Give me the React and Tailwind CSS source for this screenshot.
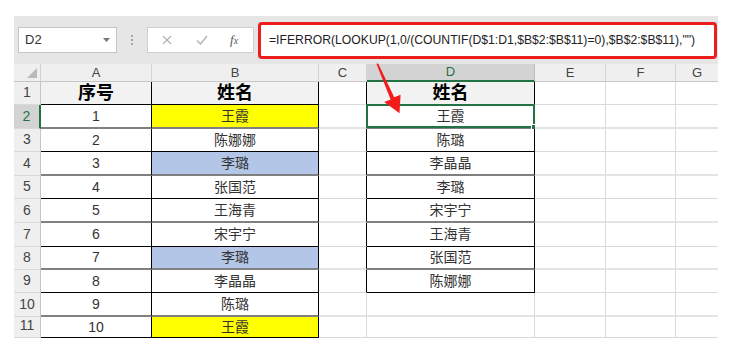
const COLS = [
  { key: 'A', w: 'w-[111px]' },
  { key: 'B', w: 'w-[167px]' },
  { key: 'C', w: 'w-[48px]' },
  { key: 'D', w: 'w-[168px]' },
  { key: 'E', w: 'w-[71px]' },
  { key: 'F', w: 'w-[70px]' },
  { key: 'G', w: 'w-[42px]' },
];

const HEIGHTS = ['h-[23px]', 'h-[24px]', 'h-[23px]', 'h-[24px]', 'h-[23px]', 'h-[24px]', 'h-[24px]', 'h-[23px]', 'h-[23px]', 'h-[24px]', 'h-[21px]'];

const A = ['序号', '1', '2', '3', '4', '5', '6', '7', '8', '9', '10'];
const B = ['姓名', '王霞', '陈娜娜', '李璐', '张国范', '王海青', '宋宇宁', '李璐', '李晶晶', '陈璐', '王霞'];
const D = ['姓名', '王霞', '陈璐', '李晶晶', '李璐', '宋宇宁', '王海青', '张国范', '陈娜娜', '', ''];

const FILL = { 2: 'bg-[#ffff00]', 4: 'bg-[#b4c6e7]', 8: 'bg-[#b4c6e7]', 11: 'bg-[#ffff00]' };

// table edges alternate between a thin black rule and a heavier grey one
const tableBottom = (r) => (r % 2 === 0 ? 'border-b-2 border-b-[#808080]' : 'border-b border-b-black');
const gridBottom = (r) => (r % 2 === 0 ? 'border-b-2 border-b-[#e4e4e4]' : 'border-b border-b-[#d9d9d9]');

function cellClass(col, r) {
  const inD = r <= 9;
  switch (col) {
    case 'A':
      return `border-r border-r-black ${tableBottom(r)} ${r === 1 ? 'bg-[#f2f2f2]' : 'bg-white'}`;
    case 'B':
      return `border-r border-r-black ${tableBottom(r)} ${r === 1 ? 'bg-[#f2f2f2]' : FILL[r] || 'bg-white'}`;
    case 'C':
      return `${inD ? 'border-r border-r-black' : 'border-r border-r-[#d9d9d9]'} ${gridBottom(r)} bg-white`;
    case 'D':
      return `${inD ? 'border-r border-r-black' : 'border-r border-r-[#d9d9d9]'} ${inD ? tableBottom(r) : gridBottom(r)} ${r === 1 ? 'bg-[#f2f2f2]' : 'bg-white'}`;
    case 'G':
      return `${gridBottom(r)} bg-white`;
    default:
      return `border-r border-r-[#d9d9d9] ${gridBottom(r)} bg-white`;
  }
}

function cellText(col, r) {
  if (col === 'A') return A[r - 1];
  if (col === 'B') return B[r - 1];
  if (col === 'D') return D[r - 1];
  return '';
}

function Toolbar() {
  return (
    <div className="flex items-center h-[48px] bg-[#e6e6e6] pl-[4px]">
      {/* Name box */}
      <div className="flex items-center justify-between w-[99px] h-[26px] bg-white border border-[#c6c6c6] pl-[6px] pr-[6px]">
        <span className="text-[13px] text-[#333]">D2</span>
        <svg width="7" height="4" viewBox="0 0 7 4">
          <polygon points="0,0 7,0 3.5,4" fill="#777" />
        </svg>
      </div>
      <div className="flex items-center justify-center w-[30px]">
        <div className="flex flex-col gap-[2px]">
          <span className="w-[2px] h-[2px] bg-[#a6a6a6]" />
          <span className="w-[2px] h-[2px] bg-[#a6a6a6]" />
          <span className="w-[2px] h-[2px] bg-[#a6a6a6]" />
        </div>
      </div>
      {/* Cancel / enter / fx */}
      <div className="flex items-center w-[107px] h-[26px] bg-white border border-[#d0d0d0]">
        <svg className="ml-[14px]" width="10" height="10" viewBox="0 0 10 10">
          <path d="M1 1 L9 9 M9 1 L1 9" stroke="#b3b3b3" strokeWidth="1.3" />
        </svg>
        <svg className="ml-[24px]" width="12" height="10" viewBox="0 0 12 10">
          <path d="M1 5.5 L4.5 9 L11 1" stroke="#b3b3b3" strokeWidth="1.4" fill="none" />
        </svg>
        <span className="ml-[22px] text-[13px] italic text-[#555] font-['Liberation_Serif',serif]">
          f<span className="text-[10px]">x</span>
        </span>
      </div>
      {/* Formula bar, outlined in red */}
      <div className="flex items-center ml-[4px] w-[459px] h-[37px] bg-white border-[3px] border-[#ee1d1d] rounded-[4px] pl-[8px]">
        <span className="text-[12.2px] text-[#222] whitespace-nowrap font-['Liberation_Sans',sans-serif]">
          =IFERROR(LOOKUP(1,0/(COUNTIF(D$1:D1,$B$2:$B$11)=0),$B$2:$B$11),"")
        </span>
      </div>
    </div>
  );
}

function ColumnHeader() {
  return (
    <div className="flex h-[18px] bg-[#efefef]">
      <div className="relative w-[27px] border-r border-r-[#cfcfcf] border-b border-b-[#c6c6c6]">
        <svg className="absolute right-[3px] bottom-[3px]" width="10" height="10" viewBox="0 0 10 10">
          <polygon points="10,0 10,10 0,10" fill="#b9b9b9" />
        </svg>
      </div>
      {COLS.map((c) =>
        c.key === 'D' ? (
          <div
            key={c.key}
            className={`${c.w} flex items-center justify-center bg-[#d3d3d3] border-r border-r-[#bdbdbd] border-b-2 border-b-[#217346] text-[13px] text-[#217346]`}
          >
            {c.key}
          </div>
        ) : (
          <div
            key={c.key}
            className={`${c.w} flex items-center justify-center ${c.key === 'G' ? '' : 'border-r border-r-[#d4d4d4]'} border-b border-b-[#c6c6c6] text-[13px] text-[#444]`}
          >
            {c.key}
          </div>
        )
      )}
    </div>
  );
}

function Row({ r }) {
  const h = HEIGHTS[r - 1];
  const active = r === 2;
  return (
    <div className={`flex ${h}`}>
      <div
        className={`w-[27px] flex items-end justify-center pb-[1px] text-[14px] ${
          active
            ? 'bg-[#d3d3d3] text-[#217346] border-r-2 border-r-[#217346]'
            : 'bg-[#efefef] text-[#444] border-r border-r-[#c6c6c6]'
        } border-b border-b-[#d9d9d9]`}
      >
        {r}
      </div>
      {COLS.map((c) => {
        const text = cellText(c.key, r);
        const head = r === 1;
        return (
          <div
            key={c.key}
            className={`${c.w} relative flex items-center justify-center ${cellClass(c.key, r)} ${
              head ? 'text-[18px] font-bold text-black' : 'text-[14px] text-[#333]'
            }`}
          >
            {text}
            {c.key === 'D' && r === 2 && (
              <div className="absolute -top-[1px] -left-[1px] -right-[1px] -bottom-[1px] border-2 border-[#217346]">
                <span className="absolute -right-[4px] -bottom-[4px] w-[6px] h-[6px] bg-[#217346] border border-white" />
              </div>
            )}
          </div>
        );
      })}
    </div>
  );
}

export default function App() {
  return (
    <div className="relative w-[735px] h-[353px] bg-white overflow-hidden font-['Liberation_Sans','Noto_Sans_CJK_SC',sans-serif]">
      <div className="ml-[14px] mt-[16px] w-[704px]">
        <Toolbar />
        <ColumnHeader />
        <div className="h-[256px] overflow-hidden">
          {HEIGHTS.map((_, i) => (
            <Row key={i} r={i + 1} />
          ))}
        </div>
      </div>

      {/* Annotation arrow */}
      <svg className="absolute left-0 top-0 pointer-events-none" width="735" height="353" viewBox="0 0 735 353">
        <polygon
          points="376.4,63.8 378.2,63.4 394.2,97.2 400.6,94.7 399.5,113.2 384.2,102.1 390.6,99.5"
          fill="#f21c1c"
        />
      </svg>
    </div>
  );
}
